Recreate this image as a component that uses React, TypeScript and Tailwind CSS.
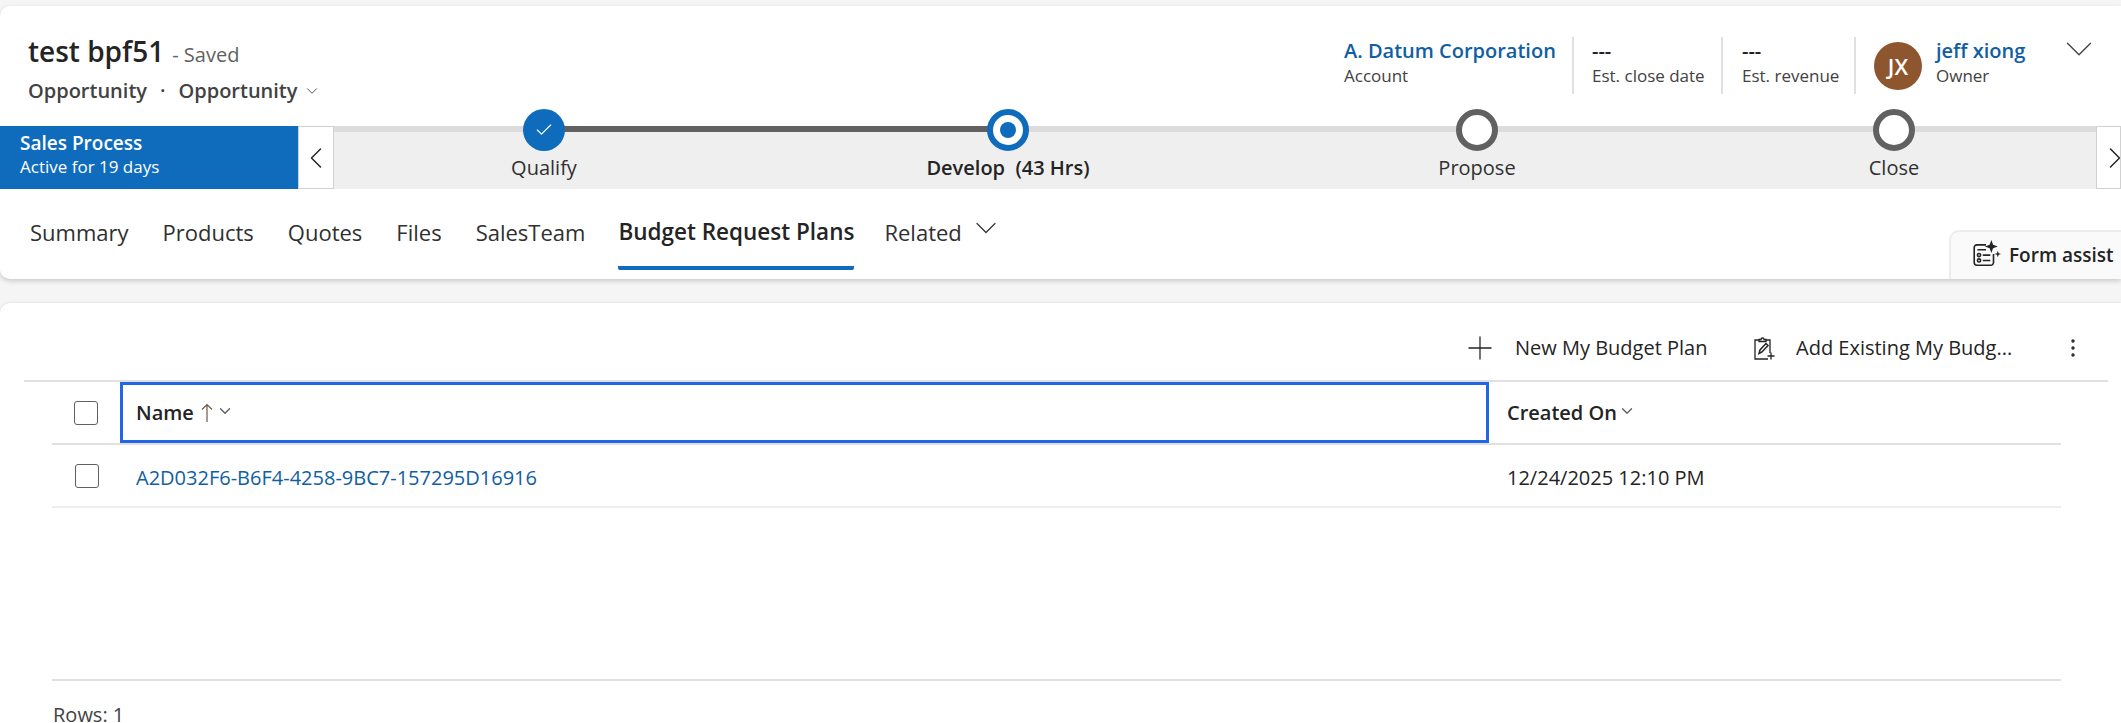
import React from "react";
import { ChevronDown, ChevronLeft, ChevronRight, Check, Plus, MoreVertical } from "lucide-react";

const tabs = ["Summary", "Products", "Quotes", "Files", "SalesTeam"];

function FormAssistIcon() {
  return (
    <svg width="30" height="30" viewBox="0 0 28 28" fill="none" stroke="#242424" strokeWidth="1.5" className="-mt-[3px] shrink-0">
      <path d="M14 5.5H5.5a2.5 2.5 0 0 0-2.5 2.5v14a2.5 2.5 0 0 0 2.5 2.5h13a2.5 2.5 0 0 0 2.5-2.5v-8" />
      <path d="M6 10h8M11 15h7M11 20h7" />
      <circle cx="7.5" cy="15" r="1.5" />
      <circle cx="7.5" cy="20" r="1.5" />
      <path d="M19 1l1.6 4.4L25 7l-4.4 1.6L19 13l-1.6-4.4L13 7l4.4-1.6z" fill="#242424" stroke="none" />
      <path d="M25 11l.8 2.2 2.2.8-2.2.8-.8 2.2-.8-2.2-2.2-.8 2.2-.8z" fill="#242424" stroke="none" />
    </svg>
  );
}

function ClipboardIcon() {
  return (
    <svg width="22" height="24" viewBox="0 0 22 24" fill="none" stroke="#242424" strokeWidth="1.3" className="shrink-0">
      <path d="M6 4H2v19h13" />
      <path d="M13 4h4v13" />
      <path d="M6 5.5V3.5h2a1.5 1.5 0 0 1 3 0h2v2z" />
      <path d="M6 17.5l1-3.5 6-6.5 2 2-6 6.5z" strokeWidth="1.5" />
      <path d="M18 16.5v7M14.5 20h7" />
    </svg>
  );
}

function SortArrow() {
  return (
    <svg width="12" height="20" viewBox="0 0 12 20" fill="none" stroke="#6e5a46" strokeWidth="1.2" className="ml-[7px] shrink-0">
      <path d="M6 19V1.5M1 6.5l5-5 5 5" />
    </svg>
  );
}

function HeaderField({ value, label, className, link }: { value: string; label: string; className: string; link?: boolean }) {
  return (
    <div className={`h-[57px] flex flex-col whitespace-nowrap ${className}`}>
      <div className={`text-[20px] leading-[28px] font-semibold h-[28px] ${link ? "text-[#115ea3]" : "text-[#242424]"}`}>{value}</div>
      <div className="text-[17px] leading-[24px] -mt-[1px] text-[#424242]">{label}</div>
    </div>
  );
}

export default function App() {
  return (
    <div className="h-[723px] w-[2121px] overflow-hidden bg-[#f5f5f5] pt-[6px] text-[#242424] font-['Open_Sans',sans-serif]">
      <div className="h-[273px] bg-white rounded-l-[10px] shadow-[0_2px_5px_rgba(0,0,0,0.18)] flex flex-col">
        <div className="h-[120px] flex shrink-0">
          <div className="pl-[28px] pt-[26px] w-[1344px] shrink-0">
            <div className="flex items-baseline h-[38px]">
              <span className="text-[28px] leading-[38px] font-semibold">test bpf51</span>
              <span className="text-[20px] ml-[8px] text-[#616161]">- Saved</span>
            </div>
            <div className="flex items-center h-[28px] mt-[7px] text-[20px] font-semibold text-[#424242]">
              <span>Opportunity</span>
              <span className="mx-[13px]">·</span>
              <span>Opportunity</span>
              <ChevronDown size={18} strokeWidth={1.2} className="ml-[6px]" />
            </div>
          </div>
          <div className="flex pt-[31px]">
            <HeaderField value="A. Datum Corporation" label="Account" link className="w-[230px] border-r-2 border-[#e0e0e0]" />
            <HeaderField value="---" label="Est. close date" className="w-[149px] pl-[18px] border-r-2 border-[#e0e0e0]" />
            <HeaderField value="---" label="Est. revenue" className="w-[133px] pl-[19px] border-r-2 border-[#e0e0e0]" />
            <div className="w-[265px] pl-[18px] flex h-[57px]">
              <div className="w-[48px] h-[48px] mt-[5px] rounded-full bg-[#8e562e] text-white flex items-center justify-center text-[22px] font-semibold shrink-0">JX</div>
              <HeaderField value="jeff xiong" label="Owner" link className="ml-[14px] w-[120px]" />
              <ChevronDown size={46} strokeWidth={0.7} className="text-[#424242] -mt-[11px] shrink-0" />
            </div>
          </div>
        </div>

        {/* business process bar */}
        <div className="h-[63px] flex shrink-0">
          <div className="w-[298px] bg-[#0f6cbd] text-white pl-[20px] shrink-0 whitespace-nowrap">
            <div className="text-[19px] leading-[24px] font-semibold mt-[5px]">Sales Process</div>
            <div className="text-[17px] leading-[22px] mt-[1px]">Active for 19 days</div>
          </div>
          <div className="w-[36px] border border-[#d1d1d1] bg-white flex items-center justify-center shrink-0">
            <ChevronLeft size={36} strokeWidth={1} className="shrink-0" />
          </div>
          <div className="flex-1 bg-[#efefef] flex flex-col">
            <div className="h-[6px] flex bg-[#dcdcdc] shrink-0">
              <div className="ml-[210px] w-[464px] bg-[#616161]" />
            </div>
            <div className="grid grid-cols-[420px_508px_430px_404px] text-[20px]">
              <div className="flex flex-col items-center -mt-[23px] relative">
                <div className="w-[42px] h-[42px] rounded-full bg-[#0f6cbd] flex items-center justify-center">
                  <Check size={20} strokeWidth={1.4} className="text-white" />
                </div>
                <span className="mt-[4px] leading-[26px] text-[#303030]">Qualify</span>
              </div>
              <div className="flex flex-col items-center -mt-[23px] relative">
                <div className="w-[42px] h-[42px] rounded-full border-[6px] border-[#0f6cbd] bg-white flex items-center justify-center">
                  <div className="w-[16px] h-[16px] rounded-full bg-[#0f6cbd]" />
                </div>
                <span className="mt-[4px] leading-[26px] font-semibold whitespace-pre">Develop  (43 Hrs)</span>
              </div>
              <div className="flex flex-col items-center -mt-[23px] relative">
                <div className="w-[42px] h-[42px] rounded-full border-[6px] border-[#616161] bg-white" />
                <span className="mt-[4px] leading-[26px] text-[#303030]">Propose</span>
              </div>
              <div className="flex flex-col items-center -mt-[23px] relative">
                <div className="w-[42px] h-[42px] rounded-full border-[6px] border-[#616161] bg-white" />
                <span className="mt-[4px] leading-[26px] text-[#303030]">Close</span>
              </div>
            </div>
          </div>
          <div className="w-[25px] border border-[#d1d1d1] bg-white flex items-center shrink-0 overflow-hidden">
            <ChevronRight size={36} strokeWidth={1} className="shrink-0" />
          </div>
        </div>

        {/* tabs */}
        <div className="flex-1 flex justify-between">
          <div className="flex pl-[30px] gap-[34px] text-[22px] h-[81px] text-[#303030] whitespace-nowrap">
            {tabs.map((t) => (
              <span key={t} className="pt-[29px] leading-[28px]">{t}</span>
            ))}
            <span className="pt-[29px] -ml-[1px] text-[22.5px] leading-[28px] h-[81px] font-semibold text-[#242424] border-b-4 border-[#0f6cbd] rounded-b-[2px]">Budget Request Plans</span>
            <span className="pt-[29px] leading-[28px] flex items-start -ml-[4px]">
              Related
              <ChevronDown size={36} strokeWidth={0.8} className="ml-[6px] -mt-[8px] shrink-0" />
            </span>
          </div>
          <div className="self-end h-[49px] w-[172px] bg-[#fafafa] border-l-2 border-t-2 border-[#ececec] rounded-tl-[10px] flex items-center pl-[20px] gap-[8px]">
            <FormAssistIcon />
            <span className="text-[19px] font-semibold whitespace-nowrap">Form assist</span>
          </div>
        </div>
      </div>

      {/* sub grid */}
      <div className="mt-[24px] h-[420px] bg-white rounded-tl-[10px] shadow-[0_0_3px_rgba(0,0,0,0.12)] pt-[21px]">
        <div className="h-[48px] mb-[8px] flex items-center pl-[1461px] text-[20px] text-[#242424] whitespace-nowrap">
          <Plus size={38} strokeWidth={0.8} className="shrink-0" />
          <span className="ml-[16px] w-[238px]">New My Budget Plan</span>
          <ClipboardIcon />
          <span className="ml-[21px] w-[266px]">Add Existing My Budg...</span>
          <MoreVertical size={24} strokeWidth={1.4} className="shrink-0 -ml-[1px]" />
        </div>
        <div className="ml-[24px] w-[2084px] border-t-2 border-[#e0e0e0] mr-[13px]">
          <div className="ml-[28px] w-[2009px] grid grid-cols-[68px_1369px_1fr] h-[63px] border-b-2 border-[#e0e0e0]">
            <div className="flex items-center pl-[22px]">
              <div className="w-[24px] h-[24px] rounded-[3px] border border-[#616161]" />
            </div>
            <div className="border-[3px] border-[#2266e3] flex items-center pl-[13px] text-[20px] font-semibold">
              Name
              <SortArrow />
              <ChevronDown size={18} strokeWidth={1.8} className="ml-[3px] -mt-[3px] text-[#616161]" />
            </div>
            <div className="flex items-center pl-[18px] text-[20px] font-semibold">
              Created On
              <ChevronDown size={18} strokeWidth={1.8} className="ml-[1px] -mt-[3px] text-[#616161]" />
            </div>
          </div>
          <div className="ml-[28px] w-[2009px] grid grid-cols-[68px_1369px_1fr] h-[63px] border-b-2 border-[#eeeeee] items-center">
            <div className="pl-[23px]">
              <div className="w-[24px] h-[24px] rounded-[3px] border border-[#616161]" />
            </div>
            <div className="pl-[16px] pt-[4px] text-[20px] text-[#115ea3]">A2D032F6-B6F4-4258-9BC7-157295D16916</div>
            <div className="pl-[18px] pt-[4px] text-[20px]">12/24/2025 12:10 PM</div>
          </div>
          <div className="ml-[28px] w-[2009px] h-[173px] border-b-2 border-[#e0e0e0]" />
          <div className="ml-[29px] mt-[26px] text-[20px] leading-[16px] text-[#424242]">Rows: 1</div>
        </div>
      </div>
    </div>
  );
}
